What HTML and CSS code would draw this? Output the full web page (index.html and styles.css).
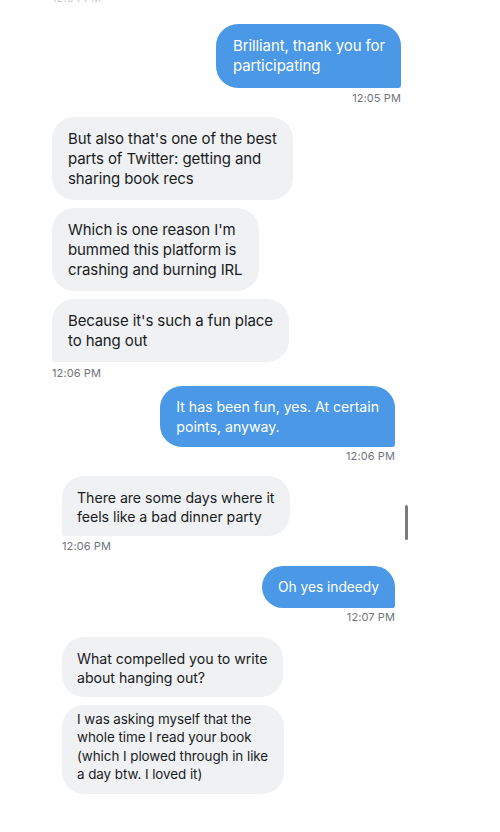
FILE: index.html
```html
<!DOCTYPE html>
<html lang="en">
<head>
<meta charset="utf-8">
<title>Messages</title>
<link rel="stylesheet" href="styles.css">
</head>
<body>
<main class="chat">
  <section class="group group-a">
    <div class="ts ts-in ts-cut">12:04 PM</div>

    <div class="row row-out first">
      <div class="bubble out tail">Brilliant, thank you for<br>participating</div>
    </div>
    <div class="ts ts-out">12:05 PM</div>

    <div class="row row-in gap-lg">
      <div class="bubble in">But also that's one of the best<br>parts of Twitter: getting and<br>sharing book recs</div>
    </div>
    <div class="row row-in gap-sm">
      <div class="bubble in">Which is one reason I'm<br>bummed this platform is<br>crashing and burning IRL</div>
    </div>
    <div class="row row-in gap-sm">
      <div class="bubble in tail">Because it's such a fun place<br>to hang out</div>
    </div>
    <div class="ts ts-in">12:06 PM</div>
  </section>

  <section class="group group-b">
    <div class="row row-out gap-xs">
      <div class="bubble out tail">It has been fun, yes. At certain<br>points, anyway.</div>
    </div>
    <div class="ts ts-out">12:06 PM</div>

    <div class="row row-in gap-lg">
      <div class="bubble in tight tail">There are some days where it<br>feels like a bad dinner party</div>
    </div>
    <div class="ts ts-in">12:06 PM</div>

    <div class="row row-out gap-lg">
      <div class="bubble out single tail">Oh yes indeedy</div>
    </div>
    <div class="ts ts-out">12:07 PM</div>

    <div class="row row-in gap-lg">
      <div class="bubble in tight">What compelled you to write<br>about hanging out?</div>
    </div>
    <div class="row row-in gap-sm">
      <div class="bubble in compact">I was asking myself that the<br>whole time I read your book<br>(which I plowed through in like<br>a day btw. I loved it)</div>
    </div>
  </section>

  <div class="scrollbar"></div>
</main>
</body>
</html>
```

FILE: styles.css
```css
html, body {
  margin: 0;
  padding: 0;
  background: #ffffff;
}

body {
  width: 500px;
  height: 832px;
  overflow: hidden;
  font-family: "Inter", "Roboto", "Liberation Sans", sans-serif;
  -webkit-font-smoothing: antialiased;
}

.chat {
  position: relative;
  display: flex;
  flex-direction: column;
}

.group {
  display: flex;
  flex-direction: column;
}

.group-a {
  padding: 0 99px 0 52px;
}

.group-b {
  padding: 0 105px 0 62px;
}

.row {
  display: flex;
}

.row-out {
  justify-content: flex-end;
}

.row-in {
  justify-content: flex-start;
}

.first { margin-top: 19px; }
.gap-xs { margin-top: 6px; }
.gap-sm { margin-top: 8px; }
.gap-lg { margin-top: 12px; }
.group-b .gap-lg { margin-top: 13px; }

.bubble {
  font-size: 15px;
  line-height: 20px;
  padding: 12px 16px 11px 17px;
  border-radius: 22px;
  letter-spacing: -0.1px;
  white-space: nowrap;
}

.group-a .bubble.out {
  padding-bottom: 12px;
}

.group-b .bubble {
  font-size: 14.2px;
  letter-spacing: -0.05px;
}

.bubble.out {
  background: #4a98e6;
  color: #ffffff;
}

.group-b .bubble.out {
  padding: 11px 16px 10px 16px;
}

.bubble.out.tail {
  border-bottom-right-radius: 3px;
}

.bubble.in {
  background: #eff1f3;
  color: #1a1c1e;
  padding-left: 16px;
  padding-right: 16px;
}

.bubble.in.tail {
  border-bottom-left-radius: 3px;
}

.bubble.tight {
  line-height: 19px;
  padding-top: 12px;
  padding-bottom: 10px;
  padding-left: 15px;
}

.group-b .bubble.single {
  font-size: 13.8px;
  padding: 11px 16px 11px 16px;
}

.group-b .bubble.compact {
  font-size: 13.4px;
  line-height: 18.3px;
  padding: 5px 16px 11px 15px;
}

.ts {
  font-size: 11px;
  line-height: 14px;
  color: #6f7479;
  margin-top: 3px;
  letter-spacing: 0.1px;
}

.ts-out {
  text-align: right;
}

.ts-in {
  text-align: left;
  margin-top: 4px;
}

.group-b .ts-out {
  margin-top: 2px;
}

.group-b .ts-in {
  margin-top: 3px;
}

.ts-cut {
  margin-top: -9px;
  color: #c9cccf;
}

.scrollbar {
  position: absolute;
  left: 405px;
  top: 505px;
  width: 3px;
  height: 35px;
  border-radius: 2px;
  background: #7b7b7b;
}
```
